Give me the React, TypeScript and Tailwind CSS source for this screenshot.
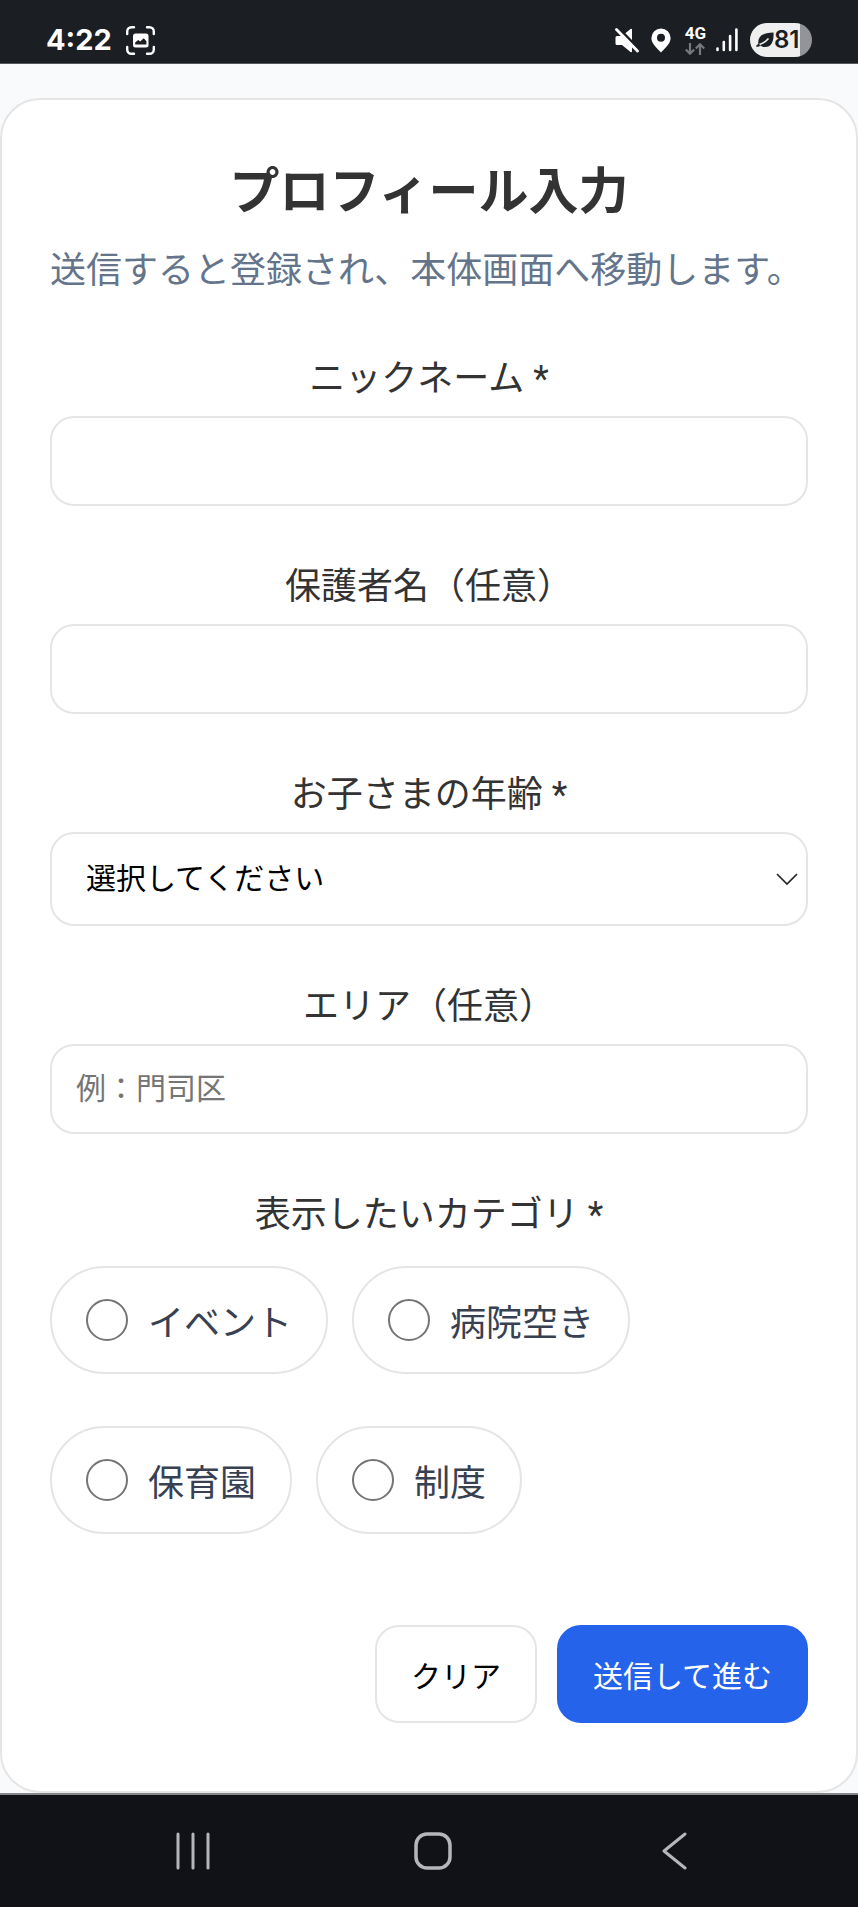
import type { ReactNode } from 'react';

const AGES = ['0歳', '1歳', '2歳', '3歳', '4歳', '5歳', '6歳以上'];

const CATEGORIES = [
  { value: 'event', label: 'イベント' },
  { value: 'hospital', label: '病院空き' },
  { value: 'nursery', label: '保育園' },
  { value: 'system', label: '制度' },
];

const inputClass =
  'block w-full h-[90px] rounded-3xl border-2 border-[#e5e5e5] bg-white px-6 pb-0.5 text-[30px] text-black placeholder:text-[#757575]';

function StatusBar() {
  return (
    <header className="flex items-center justify-between bg-[#1b1e23] border-b border-[#55585c] pt-[23px] pb-1.5 px-[46px] font-['Inter',sans-serif] text-white">
      <div className="flex items-center gap-3.5">
        <span className="text-[29px] leading-8 font-bold">4:22</span>
        <svg width="29" height="29" viewBox="0 0 29 29" fill="none" aria-hidden="true">
          <path
            d="M1.2 8V5.5C1.2 3 3 1.2 5.5 1.2H8M21 1.2h2.5c2.5 0 4.3 1.8 4.3 4.3V8M27.8 21v2.5c0 2.5-1.8 4.3-4.3 4.3H21M8 27.8H5.5C3 27.8 1.2 26 1.2 23.5V21"
            stroke="#fff"
            strokeWidth="2.4"
            strokeLinecap="round"
          />
          <rect x="7" y="7.5" width="15.5" height="14" rx="2.5" fill="#fff" />
          <path d="M9.2 18.6v-2l3-2.6 2 1.6 3.6-3.4 2.6 3v3.4z" fill="#1b1e23" />
        </svg>
      </div>

      <div className="flex items-center">
        <svg width="24" height="25" viewBox="0 0 24 25" aria-hidden="true">
          <path d="M2 8h5L15.5 1q1.5-1 1.5 1v21q0 2-1.5 1L7 17H2q-1.5 0-1.5-1.5v-6Q.5 8 2 8z" fill="#fff" />
          <path d="M3.5 0L24 21" stroke="#1b1e23" strokeWidth="2.6" />
          <path d="M1.5 1.5L22.5 23" stroke="#fff" strokeWidth="2.8" strokeLinecap="round" />
        </svg>
        <svg className="ml-3" width="20" height="25" viewBox="0 0 20 25" aria-hidden="true">
          <path
            fillRule="evenodd"
            d="M10 .5a9.6 9.6 0 0 1 9.6 9.6c0 5.4-5.2 10-9.6 14.4C5.6 20.1.4 15.5.4 10.1A9.6 9.6 0 0 1 10 .5zM10 5.8a4 4 0 1 0 0 8 4 4 0 0 0 0-8z"
            fill="#fff"
          />
        </svg>
        <div className="ml-3.5 flex flex-col items-center gap-0.5">
          <span className="font-['Roboto',sans-serif] text-[17px] leading-[15px] font-bold">4G</span>
          <svg width="20" height="12" viewBox="0 0 20 12" fill="none" stroke="#77797d" strokeWidth="2.2" aria-hidden="true">
            <path d="M5 0v10.5M.8 6.5L5 10.7l4.2-4.2M15 12V1.3M10.8 5.5L15 1.3l4.2 4.2" />
          </svg>
        </div>
        <svg className="ml-2.5" width="22" height="24" viewBox="0 0 22 24" stroke="#fff" strokeWidth="2.6" strokeLinecap="round" aria-hidden="true">
          <path d="M1.5 20.5v1.5M7.8 14v8M14.1 8v14M20.4 1.5V22" />
        </svg>
        <div className="ml-3 flex h-[34px] w-[62px] items-center rounded-full bg-linear-to-r from-[#efefef] from-80% to-[#929498] to-80% pl-1.5 text-[#1b1e23]">
          <svg width="18" height="16" viewBox="0 0 18 16" aria-hidden="true">
            <path d="M17.5.5C18 8 16 15 9 15c-2 0-3.5-.6-4.5-1.6C3.5 14.5 2 15 .3 14.8c-.4-1.3.8-2.2 2-2.8C1.5 4 7 .8 17.5.5z" fill="#1b1e23" />
            <path d="M3.5 12.5C6.5 11.5 10 9.5 12.5 6.5" stroke="#efefef" strokeWidth="1.6" fill="none" />
          </svg>
          <span className="text-[24px] leading-8 font-semibold">81</span>
        </div>
      </div>
    </header>
  );
}

function NavBar() {
  return (
    <nav className="mt-auto grid h-[114px] grid-cols-3 items-center justify-items-center border-t-2 border-[#85868c] bg-[#111217] pl-[73px] pr-16">
      <button type="button" aria-label="履歴">
        <svg width="36" height="38" viewBox="0 0 36 38" fill="none" stroke="#b6b6ba" strokeWidth="3" strokeLinecap="round">
          <path d="M3 2v34M18 2v34M33 2v34" />
        </svg>
      </button>
      <button type="button" aria-label="ホーム">
        <svg width="38" height="38" viewBox="0 0 38 38" fill="none" stroke="#b6b6ba" strokeWidth="3.5">
          <rect x="2" y="2" width="34" height="34" rx="11" />
        </svg>
      </button>
      <button type="button" aria-label="戻る">
        <svg width="26" height="38" viewBox="0 0 26 38" fill="none" stroke="#b6b6ba" strokeWidth="3" strokeLinecap="round" strokeLinejoin="round">
          <path d="M24 2L3 19l21 17" />
        </svg>
      </button>
    </nav>
  );
}

function Field({ id, label, children }: { id: string; label: string; children: ReactNode }) {
  return (
    <div className="mt-[54px]">
      <label htmlFor={id} className="mb-2.5 block text-center text-[36px] leading-[54px]">
        {label}
      </label>
      {children}
    </div>
  );
}

export default function App() {
  return (
    <div className="flex min-h-screen flex-col bg-[#f9fafc] font-['Roboto','Noto_Sans_CJK_JP',sans-serif] text-[#333333]">
      <StatusBar />

      <main className="pt-[34px]">
        <form
          className="rounded-[40px] border-2 border-[#e5e5e5] bg-white px-12 pt-14 pb-[68px]"
          onSubmit={(e) => e.preventDefault()}
        >
          <h1 className="text-center text-[50px] leading-[72px] font-bold">プロフィール入力</h1>
          <p className="mt-4 text-[36px] leading-[54px] whitespace-nowrap text-[#64748b]">
            送信すると登録され、本体画面へ移動します。
          </p>

          <Field id="nickname" label="ニックネーム *">
            <input id="nickname" name="nickname" type="text" className={inputClass} />
          </Field>

          <Field id="guardian" label="保護者名（任意）">
            <input id="guardian" name="guardian" type="text" className={inputClass} />
          </Field>

          <Field id="age" label="お子さまの年齢 *">
            <div className="relative">
              <select
                id="age"
                name="age"
                defaultValue=""
                className="block h-[94px] w-full appearance-none rounded-3xl border-2 border-[#e5e5e5] bg-white px-[34px] pb-0.5 text-[30px] text-black"
              >
                <option value="">選択してください</option>
                {AGES.map((age) => (
                  <option key={age} value={age}>
                    {age}
                  </option>
                ))}
              </select>
              <svg
                className="pointer-events-none absolute top-1/2 right-2.5 -translate-y-1/2"
                width="22"
                height="13"
                viewBox="0 0 22 13"
                fill="none"
                stroke="#222"
                strokeWidth="1.6"
                aria-hidden="true"
              >
                <path d="M1 1.5l10 10 10-10" />
              </svg>
            </div>
          </Field>

          <Field id="area" label="エリア（任意）">
            <input id="area" name="area" type="text" placeholder="例：門司区" className={inputClass} />
          </Field>

          <fieldset className="mt-[54px]">
            <legend className="mb-6 w-full text-center text-[36px] leading-[54px]">表示したいカテゴリ *</legend>
            <div className="flex flex-wrap gap-x-6 gap-y-[52px]">
              {CATEGORIES.map((category) => (
                <label
                  key={category.value}
                  className="flex h-[108px] items-center gap-5 rounded-full border-2 border-[#e5e5e5] px-[34px] text-[36px] leading-[54px] text-[#374151]"
                >
                  <input
                    type="radio"
                    name="category"
                    value={category.value}
                    className="size-[42px] appearance-none rounded-full border-2 border-[#757575] bg-white checked:border-[12px] checked:border-[#2563eb]"
                  />
                  <span className="pt-2">{category.label}</span>
                </label>
              ))}
            </div>
          </fieldset>

          <div className="mt-[91px] flex justify-end gap-5">
            <button
              type="reset"
              className="h-[98px] rounded-3xl border-2 border-[#e5e5e5] bg-white px-[34px] pt-1 text-[30px] text-black"
            >
              クリア
            </button>
            <button
              type="submit"
              className="h-[98px] rounded-3xl border-2 border-[#2563eb] bg-[#2563eb] px-[34px] pt-1 text-[30px] text-white"
            >
              送信して進む
            </button>
          </div>
        </form>
      </main>

      <NavBar />
    </div>
  );
}
